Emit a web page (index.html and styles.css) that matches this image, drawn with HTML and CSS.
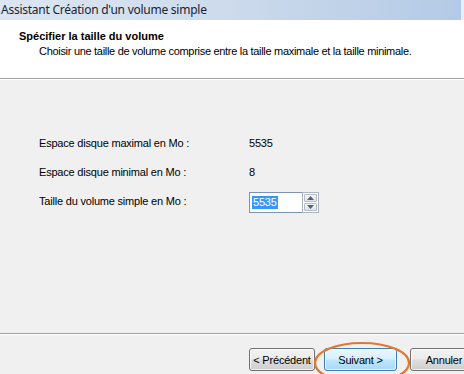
FILE: index.html
```html
<!DOCTYPE html>
<html lang="fr">
<head>
<meta charset="utf-8">
<title>Assistant Création d'un volume simple</title>
<link rel="stylesheet" href="styles.css">
</head>
<body>
<div class="window">
  <div class="titlebar"><span class="title-text">Assistant Création d'un volume simple</span></div>
  <div class="header">
    <div class="header-title">Spécifier la taille du volume</div>
    <div class="header-sub">Choisir une taille de volume comprise entre la taille maximale et la taille minimale.</div>
  </div>
  <div class="content">
    <div class="form">
      <div class="row"><span class="label">Espace disque maximal en Mo :</span><span class="value">5535</span></div>
      <div class="row"><span class="label">Espace disque minimal en Mo :</span><span class="value">8</span></div>
      <div class="row row-input">
        <span class="label">Taille du volume simple en Mo :</span>
        <div class="spin">
          <div class="spin-field"><span class="sel">5535</span></div>
          <div class="spin-btns">
            <div class="spin-btn"><svg width="7" height="4" viewBox="0 0 7 4"><path d="M0 4 L3.5 0 L7 4 Z" fill="#4d6185"/></svg></div>
            <div class="spin-btn"><svg width="7" height="4" viewBox="0 0 7 4"><path d="M0 0 L3.5 4 L7 0 Z" fill="#4d6185"/></svg></div>
          </div>
        </div>
      </div>
    </div>
  </div>
  <div class="footer">
    <button class="btn btn-prev">&lt; Précédent</button>
    <button class="btn btn-default">Suivant &gt;</button>
    <button class="btn btn-cancel">Annuler</button>
    <svg class="ring" width="100" height="44" viewBox="0 0 100 44"><ellipse cx="50" cy="23" rx="47" ry="20" fill="none" stroke="#e4762f" stroke-width="2.2"/></svg>
  </div>
</div>
</body>
</html>
```
FILE: styles.css
```css
html, body {
  margin: 0;
  padding: 0;
}
body {
  width: 464px;
  height: 374px;
  overflow: hidden;
  background: #f0f0f0;
  font-family: "Liberation Sans", Arial, sans-serif;
  font-size: 11px;
  letter-spacing: -0.2px;
  color: #000;
}
.window {
  width: 464px;
  height: 374px;
  display: flex;
  flex-direction: column;
  overflow: hidden;
}
.titlebar {
  height: 20px;
  flex: none;
  background: linear-gradient(to right, #dbe6f2 0%, #cfdcec 45%, #b3cae6 100%);
  border-right: 3px solid #e8eef6;
  display: flex;
  align-items: center;
  padding-left: 1px;
  box-sizing: border-box;
}
.title-text {
  font-family: "Noto Sans", "Open Sans", sans-serif;
  font-size: 12px;
  color: #1a2433;
  letter-spacing: -0.25px;
  position: relative;
  top: -1px;
}
.header {
  height: 59px;
  flex: none;
  background: #fff;
  border-bottom: 1px solid #a0a0a0;
  box-sizing: border-box;
  padding: 10px 0 0 19px;
}
.header-title {
  font-weight: bold;
  font-size: 11px;
  line-height: 13px;
  letter-spacing: 0;
}
.header-sub {
  margin-left: 20px;
  margin-top: 2px;
  line-height: 13px;
  letter-spacing: -0.3px;
}
.content {
  height: 255px;
  flex: none;
  background: #f0f0f0;
  border-top: 1px solid #fff;
  border-bottom: 1px solid #a0a0a0;
  box-sizing: border-box;
  padding: 56px 0 0 39px;
}
.form {
  display: flex;
  flex-direction: column;
  gap: 16px;
}
.row {
  display: flex;
  align-items: center;
  height: 13px;
}
.label {
  width: 210px;
  flex: none;
}
.spin {
  display: flex;
  align-items: stretch;
  height: 21px;
  margin-top: 3px;
}
.spin-field {
  width: 53px;
  border: 1px solid #7c93b5;
  border-right: none;
  background: #fff;
  box-sizing: border-box;
  display: flex;
  align-items: center;
  padding-left: 2px;
}
.sel {
  background: #3399ff;
  color: #fff;
  line-height: 13px;
  padding: 0 1px;
}
.spin-btns {
  width: 17px;
  border: 1px solid #aab4c4;
  box-sizing: border-box;
  display: flex;
  flex-direction: column;
  background: #fff;
  padding: 1px;
  gap: 1px;
}
.spin-btn {
  flex: 1;
  border: 1px solid #b4bcc8;
  background: linear-gradient(#f6f6f6, #e2e2e2);
  display: flex;
  align-items: center;
  justify-content: center;
  border-radius: 1px;
}
.footer {
  flex: 1;
  background: #f0f0f0;
  border-top: 1px solid #fff;
  display: flex;
  align-items: flex-start;
  padding: 13px 0 0 249px;
  position: relative;
}
.btn {
  font-family: "Liberation Sans", Arial, sans-serif;
  font-size: 11px;
  letter-spacing: -0.2px;
  height: 23px;
  padding: 0;
  border: 1px solid #707070;
  border-radius: 3px;
  background: linear-gradient(#f2f2f2 0%, #ebebeb 48%, #dddddd 52%, #cfcfcf 100%);
  color: #000;
  flex: none;
  box-shadow: inset 0 0 0 1px rgba(255,255,255,0.7);
}
.btn-prev {
  width: 66px;
}
.btn-default {
  width: 73px;
  margin-left: 9px;
  border-color: #3c7fb1;
  background: linear-gradient(#eaf6fd 0%, #d9f0fc 48%, #bee6fd 52%, #a7d9f5 100%);
}
.btn-cancel {
  width: 68px;
  margin-left: 13px;
}
.ring {
  position: absolute;
  left: 312px;
  top: 5px;
}
```
